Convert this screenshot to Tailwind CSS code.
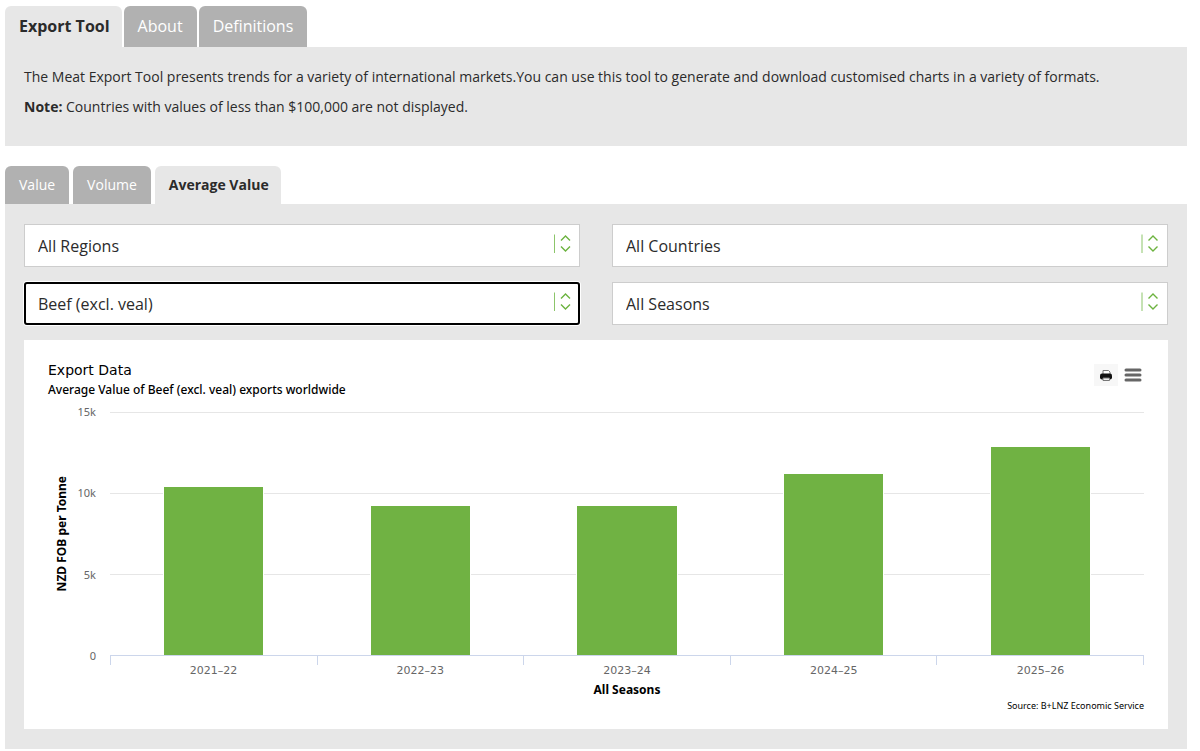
<!DOCTYPE html>
<html lang="en">
<head>
    <meta charset="UTF-8">
    <meta name="viewport" content="width=device-width, initial-scale=1.0">
    <title>Meat Export Tool</title>
    <script src="https://cdn.jsdelivr.net/npm/@tailwindcss/browser@4"></script>
</head>
<body class="bg-white pt-[6px] pl-[5px] pr-[13px] font-['Open_Sans',sans-serif] text-[#2b2b2b]">
    <!-- Main tabs -->
    <nav class="flex gap-[2px] text-base leading-[41px]">
        <a href="#tool" class="rounded-t-md bg-[#e7e7e7] pr-3 pl-[14px] font-bold">Export Tool</a>
        <a href="#about" class="rounded-t-md bg-[#b1b1b1] px-[14px] text-white">About</a>
        <a href="#definitions" class="rounded-t-md bg-[#b1b1b1] px-[14px] text-white">Definitions</a>
    </nav>
    <section id="tool" class="bg-[#e7e7e7] px-[19px] pt-5 pb-[29px] text-sm">
        <p class="mb-[10px]">The Meat Export Tool presents trends for a variety of international markets.You can use this tool to generate and download customised charts in a variety of formats.</p>
        <p><strong>Note:</strong> Countries with values of less than $100,000 are not displayed.</p>
    </section>

    <!-- Chart tabs -->
    <nav class="mt-5 flex gap-1 text-sm leading-[38px]">
        <a href="#value" class="rounded-t-md bg-[#b1b1b1] px-[14px] text-white">Value</a>
        <a href="#volume" class="rounded-t-md bg-[#b1b1b1] px-[14px] text-white">Volume</a>
        <a href="#average" class="rounded-t-md bg-[#e7e7e7] pr-3 pl-[14px] font-bold">Average Value</a>
    </nav>
    <section id="average" class="bg-[#e7e7e7] px-[19px] pt-5 pb-5">
        <form class="grid grid-cols-2 gap-x-8 gap-y-[15px] text-base">
            <div class="relative">
                <select aria-label="Region" class="block h-[43px] w-full appearance-none border border-[#cdcdcd] bg-white px-[13px]">
                    <option>All Regions</option>
                </select>
                <svg class="pointer-events-none absolute top-[10px] right-2" width="20" height="20" viewBox="0 0 20 20" fill="none" stroke="#6cb33f"><path d="M2.5 0.5V19" stroke="#8cc56a"/><path d="M9 6.5L13.5 2L18 6.5M9 12.5L13.5 17L18 12.5" stroke-width="1.4"/></svg>
            </div>
            <div class="relative">
                <select aria-label="Country" class="block h-[43px] w-full appearance-none border border-[#cdcdcd] bg-white px-[13px]">
                    <option>All Countries</option>
                </select>
                <svg class="pointer-events-none absolute top-[10px] right-2" width="20" height="20" viewBox="0 0 20 20" fill="none" stroke="#6cb33f"><path d="M2 0.5V19" stroke="#8cc56a"/><path d="M8.5 6.5L13 2L17.5 6.5M8.5 12.5L13 17L17.5 12.5" stroke-width="1.4"/></svg>
            </div>
            <div class="relative">
                <select aria-label="Product" class="block h-[43px] w-full appearance-none rounded-[3px] border-2 border-black bg-white px-3 ring-1 ring-white">
                    <option>Beef (excl. veal)</option>
                </select>
                <svg class="pointer-events-none absolute top-[10px] right-2" width="20" height="20" viewBox="0 0 20 20" fill="none" stroke="#6cb33f"><path d="M2.5 0.5V19" stroke="#8cc56a"/><path d="M9 6.5L13.5 2L18 6.5M9 12.5L13.5 17L18 12.5" stroke-width="1.4"/></svg>
            </div>
            <div class="relative">
                <select aria-label="Season" class="block h-[43px] w-full appearance-none border border-[#cdcdcd] bg-white px-[13px]">
                    <option>All Seasons</option>
                </select>
                <svg class="pointer-events-none absolute top-[10px] right-2" width="20" height="20" viewBox="0 0 20 20" fill="none" stroke="#6cb33f"><path d="M2 0.5V19" stroke="#8cc56a"/><path d="M8.5 6.5L13 2L17.5 6.5M8.5 12.5L13 17L17.5 12.5" stroke-width="1.4"/></svg>
            </div>
        </form>

        <div class="mt-[15px] bg-white px-6 pt-5 pb-[15px] font-['DejaVu_Sans',sans-serif] text-[11px] text-black">
            <div class="flex justify-between">
                <div>
                    <h2 class="text-sm">Export Data</h2>
                    <p class="font-['Noto_Sans',sans-serif] text-xs leading-5 font-medium">Average Value of Beef (excl. veal) exports worldwide</p>
                </div>
                <div class="flex items-center gap-1 self-start pt-1">
                    <button type="button" aria-label="Print chart" class="flex h-[22px] w-6 items-center justify-center bg-[#f7f7f7]">
                        <svg width="14" height="14" viewBox="0 0 14 14"><path d="M4 6V2.500h5.500L11 4v2" fill="#fff" stroke="#777"/><rect x="1" y="5.500" width="12" height="6" rx="2" fill="#111"/><path d="M4 10h6.500v2.500H4z" fill="#eee" stroke="#777"/></svg>
                    </button>
                    <button type="button" aria-label="Chart menu" class="flex h-[22px] w-[22px] items-center justify-center">
                        <svg width="18" height="14" viewBox="0 0 18 14" stroke="#666" stroke-width="3" stroke-linecap="round"><path d="M2 2h14M2 7h14M2 12h14"/></svg>
                    </button>
                </div>
            </div>

            <div class="mt-3 grid grid-cols-[62px_1fr]">
                <div class="flex h-[244px] justify-between pr-[14px]">
                    <div class="flex w-7 items-center justify-center">
                        <span class="rotate-180 font-['Noto_Sans',sans-serif] text-xs font-bold whitespace-nowrap [writing-mode:vertical-rl]">NZD FOB per Tonne</span>
                    </div>
                    <div class="-my-2 flex flex-col justify-between text-right font-['Noto_Sans',sans-serif] leading-4 text-[#666]">
                        <span>15k</span><span>10k</span><span>5k</span><span>0</span>
                    </div>
                </div>

                <div class="grid h-[244px]">
                    <!-- grid lines -->
                    <div class="col-start-1 row-start-1 flex flex-col justify-between">
                        <div class="h-px bg-[#e6e6e6]"></div>
                        <div class="h-px bg-[#e6e6e6]"></div>
                        <div class="h-px bg-[#e6e6e6]"></div>
                        <div class="h-px bg-[#ccd6eb]"></div>
                    </div>
                    <!-- columns, share of 15k -->
                    <div class="z-10 col-start-1 row-start-1 grid grid-cols-5 items-end justify-items-center pb-px">
                        <div class="w-[48%] bg-[#70b243] shadow-[0_-1px_white,1px_0_white,-1px_0_white]" style="height: 69%"></div>
                        <div class="w-[48%] bg-[#70b243] shadow-[0_-1px_white,1px_0_white,-1px_0_white]" style="height: 61.3%"></div>
                        <div class="w-[48%] bg-[#70b243] shadow-[0_-1px_white,1px_0_white,-1px_0_white]" style="height: 61.3%"></div>
                        <div class="w-[48%] bg-[#70b243] shadow-[0_-1px_white,1px_0_white,-1px_0_white]" style="height: 74.5%"></div>
                        <div class="w-[48%] bg-[#70b243] shadow-[0_-1px_white,1px_0_white,-1px_0_white]" style="height: 85.4%"></div>
                    </div>
                </div>

                <div class="col-start-2 grid h-[9px] grid-cols-5 border-r border-[#ccd6eb]">
                    <div class="border-l border-[#ccd6eb]"></div>
                    <div class="border-l border-[#ccd6eb]"></div>
                    <div class="border-l border-[#ccd6eb]"></div>
                    <div class="border-l border-[#ccd6eb]"></div>
                    <div class="border-l border-[#ccd6eb]"></div>
                </div>
                <div class="col-start-2 -mt-[2px] grid grid-cols-5 text-center leading-4 text-[#666]">
                    <span>2021–22</span>
                    <span>2022–23</span>
                    <span>2023–24</span>
                    <span>2024–25</span>
                    <span>2025–26</span>
                </div>
                <p class="col-start-2 mt-[3px] text-center font-['Noto_Sans',sans-serif] text-xs leading-4 font-bold">All Seasons</p>
            </div>
            <p class="text-right font-['Noto_Sans',sans-serif] text-[9px] leading-4">Source: B+LNZ Economic Service</p>
        </div>
    </section>
</body>
</html>
